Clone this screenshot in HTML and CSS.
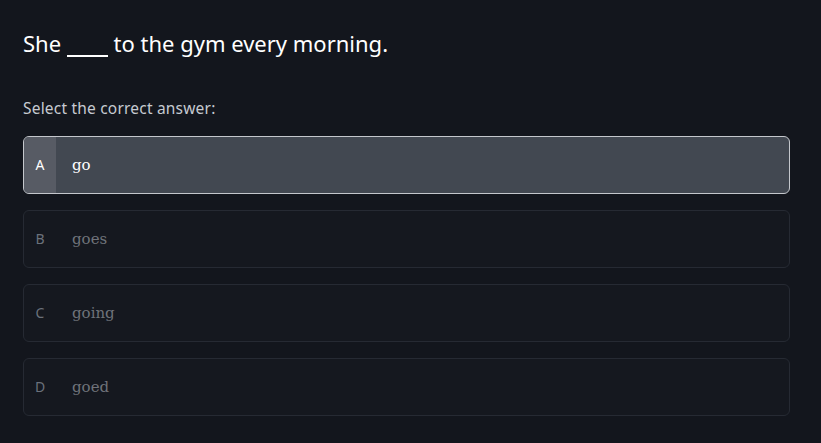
FILE: index.html
```html
<!DOCTYPE html>
<html lang="en">
<head>
<meta charset="utf-8">
<title>Quiz</title>
<link rel="stylesheet" href="styles.css">
</head>
<body>
<main class="quiz">
  <h1 class="question">She <span class="blank"></span> to the gym every morning.</h1>
  <p class="prompt">Select the correct answer:</p>
  <div class="options">
    <div class="option selected"><span class="letter">A</span><span class="text">go</span></div>
    <div class="option"><span class="letter">B</span><span class="text">goes</span></div>
    <div class="option"><span class="letter">C</span><span class="text">going</span></div>
    <div class="option"><span class="letter">D</span><span class="text">goed</span></div>
  </div>
</main>
</body>
</html>
```

FILE: styles.css
```css
html, body {
  margin: 0;
  padding: 0;
  background: #13161d;
  width: 821px;
  height: 443px;
  overflow: hidden;
}
body {
  font-family: "Noto Sans", "Open Sans", sans-serif;
  color: #ffffff;
}
.quiz {
  padding: 25px 31px 0 23px;
}
.question {
  margin: 0;
  font-size: 22px;
  font-weight: 400;
  line-height: 36px;
  color: #ffffff;
  letter-spacing: 0;
}
.blank {
  display: inline-block;
  width: 41px;
  height: 2px;
  background: #ffffff;
  vertical-align: -5px;
}
.prompt {
  margin: 37px 0 0 0;
  font-size: 15.5px;
  line-height: 20px;
  color: #c6cad1;
  letter-spacing: 0.2px;
}
.options {
  margin-top: 18px;
  display: flex;
  flex-direction: column;
  gap: 16px;
}
.option {
  display: flex;
  align-items: stretch;
  height: 58px;
  box-sizing: border-box;
  border: 1px solid #262a33;
  border-radius: 6px;
  background: #15181f;
  overflow: hidden;
}
.option.selected {
  border-color: #c4c7cc;
  background: #424851;
}
.letter {
  width: 32px;
  display: flex;
  align-items: center;
  justify-content: center;
  font-size: 14px;
  color: #6b717b;
  padding-bottom: 2px;
}
.selected .letter {
  background: #575b64;
  color: #ffffff;
}
.text {
  display: flex;
  align-items: center;
  padding-left: 16px;
  font-family: "DejaVu Serif", serif;
  font-size: 15px;
  color: #6f737a;
}
.selected .text {
  color: #ffffff;
}
```
